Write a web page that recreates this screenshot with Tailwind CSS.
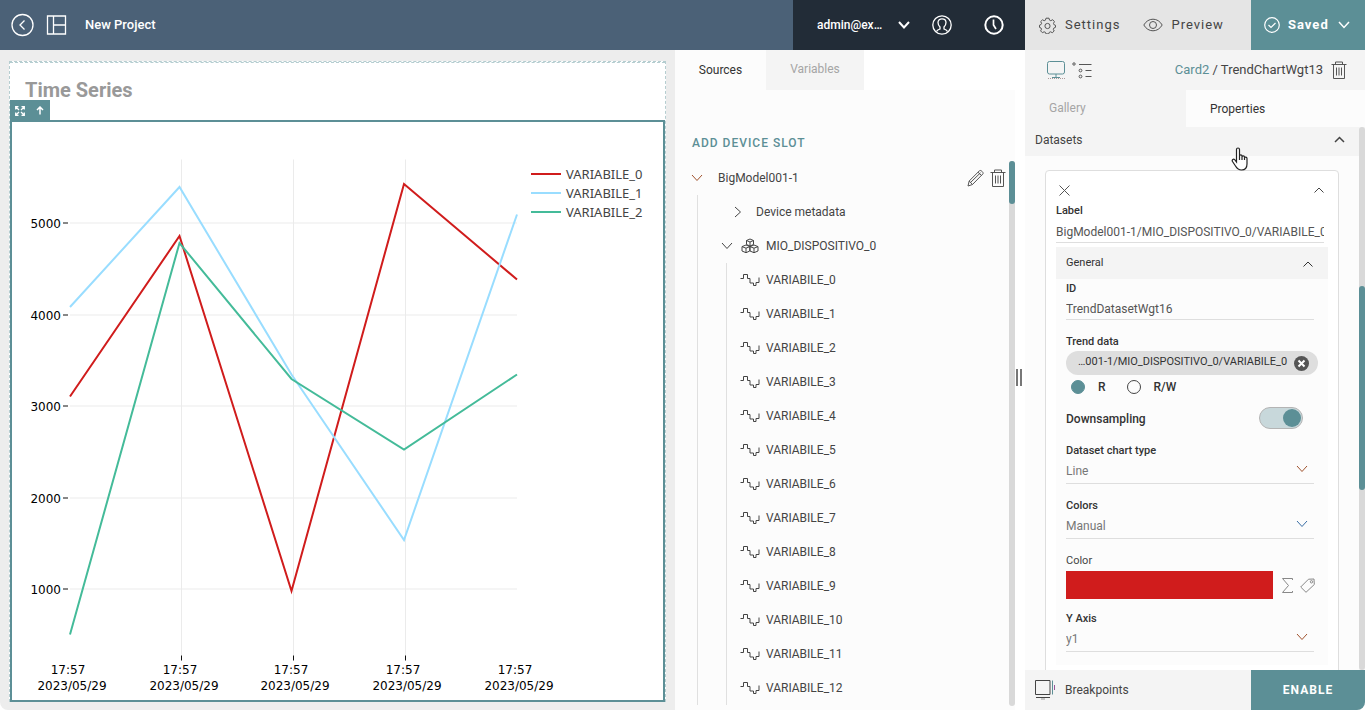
<!DOCTYPE html>
<html lang="en">
<head>
<meta charset="utf-8">
<meta name="viewport" content="width=device-width, initial-scale=1">
<title>New Project</title>
<script src="https://cdn.jsdelivr.net/npm/@tailwindcss/browser@4"></script>
</head>
<body class="bg-white font-['Roboto',sans-serif] text-xs text-[#444]">
<svg class="hidden" xmlns="http://www.w3.org/2000/svg">
  <symbol id="wave" viewBox="0 0 20 14"><path d="M.5 5.500H3.500V1.500h4V5.500H10v4.500h3.500V12.500H16V9.500h3V4.500" fill="none" stroke="#444" /></symbol>
  <symbol id="down" viewBox="0 0 12 8"><path d="M1 1l5 5.500 5-5.500" fill="none" stroke="currentColor"/></symbol>
  <symbol id="up" viewBox="0 0 12 8"><path d="M1.500 6.500L6 2l4.500 4.500" fill="none" stroke="currentColor"/></symbol>
  <symbol id="trash" viewBox="0 0 16 18"><g fill="none" stroke="#555"><path d="M.5 3.500h15M4.500 3.500v-2.500h7v2.500M2.500 3.500v14h11v-14M5.500 6.500v8M8 6.500v8M10.500 6.500v8"/></g></symbol>
</svg>
<div class="flex h-screen flex-col overflow-hidden rounded-b-lg">

  <header class="flex h-[50px] shrink-0 text-white">
    <div class="flex min-w-0 flex-1 items-center bg-[#4b6177] pl-[11px]">
      <button aria-label="Back" class="mr-3"><svg width="23" height="24" viewBox="0 0 23 24" fill="none" stroke="#fff" stroke-width="1.300"><circle cx="11.500" cy="12" r="10.500"/><path d="M13.500 7.500L9 12l4.500 4.500"/></svg></button>
      <button aria-label="Layout" class="mr-[18px]"><svg width="21" height="20" viewBox="0 0 21 20" fill="none" stroke="#fff" stroke-width="1.300"><path d="M1.500 1h18v18h-18zM7.500 1v18M7.500 10h12"/></svg></button>
      <h1 class="text-[13px] font-medium">New Project</h1>
    </div>
    <div class="flex w-[232px] items-center bg-[#222c37] pl-6">
      <button class="flex w-[93px] items-center justify-between text-xs font-medium"><span>admin@ex…</span><svg width="12" height="8"><use href="#down" stroke-width="2"/></svg></button>
      <button aria-label="Account" class="ml-[22px]"><svg width="20" height="20" viewBox="0 0 20 20" fill="none" stroke="#fff" stroke-width="1.300"><circle cx="10" cy="10" r="9.200"/><path d="M4.500 16.500c.5-1.500 2-2 3.500-2.500v-2C6.500 10.500 6 9 6 7.500 6 5 7.800 3.800 10 3.800S14 5 14 7.500c0 1.500-.5 3-2 4.500v2c1.500.5 3 1 3.500 2.500"/></svg></button>
      <button aria-label="History" class="ml-8"><svg width="20" height="20" viewBox="0 0 20 20" fill="none" stroke="#fff"><circle cx="10" cy="10" r="8.700" stroke-width="2"/><path d="M9.500 4.500v5.500l2.500 4" stroke-width="1.700"/></svg></button>
    </div>
    <div class="flex w-[340px] bg-[#e5e5e5] text-[13px] tracking-[1px] text-[#444]">
      <button class="flex items-center pl-[14px]"><svg class="mr-[9px]" width="17" height="17" viewBox="0 0 17 17" fill="none" stroke="#555" stroke-linejoin="round"><path d="M7 1.200h3l.5 1.900 1.300.6 1.900-1 1.700 1.900-.9 1.800.4 1.200 1.600.7v2l-1.700.8-.5 1.200.9 1.700-1.900 1.700-1.700-.9-1.300.5-.6 1.600H7l-.6-1.600-1.300-.5-1.700.9-1.800-1.800.9-1.700-.5-1.200-1.500-.6v-2.200l1.500-.6.6-1.300-.9-1.700 1.800-1.800 1.700.9 1.200-.5z"/><circle cx="8.500" cy="9" r="2.600"/></svg>Settings</button>
      <button class="flex items-center pl-[23px]"><svg class="mr-2" width="20" height="14" viewBox="0 0 20 14" fill="none" stroke="#555"><path d="M.8 7C3 3.200 6.300 1.200 10 1.200S17 3.200 19.200 7C17 10.800 13.700 12.800 10 12.800S3 10.800.8 7z"/><circle cx="10" cy="7" r="3.500"/></svg>Preview</button>
      <button class="ml-auto flex w-[114px] items-center bg-[#5c8f96] pl-[13px] font-bold text-white"><svg class="mr-2" width="16" height="16" viewBox="0 0 16 16" fill="none" stroke="#fff" stroke-width="1.200"><circle cx="8" cy="8" r="7.300"/><path d="M4.500 8l2.500 2.500L11.500 6"/></svg>Saved<svg class="ml-[9px]" width="12" height="8" viewBox="0 0 12 8" fill="none" stroke="#fff" stroke-width="1.500"><path d="M1 1l5 5.500 5-5.500"/></svg></button>
    </div>
  </header>

  <div class="flex min-h-0 flex-1">
    <main class="min-w-0 flex-1 bg-[#ededed] px-[9px] pt-[11px] pb-2">
      <section class="flex h-full flex-col border border-b-0 border-dashed border-[#b5cdd0] bg-white">
        <h2 class="h-[58px] shrink-0 border-t border-dashed border-[#b5cdd0] pt-[13px] pl-[15px] text-xl font-bold leading-7 text-[#999]">Time Series</h2>
        <div class="relative min-h-0 flex-1 border-2 border-[#5c8f96]">
          <div class="absolute -top-[22px] -left-0.5 flex h-[21px] w-10 items-center bg-[#5c8f96]">
            <button aria-label="Expand" class="w-5"><svg class="mx-auto" width="10" height="10" viewBox="0 0 10 10" fill="none" stroke="#fff" stroke-width="1.300"><path d="M.7 3.500V.7h2.800M6.500.7h2.800v2.800M9.300 6.500v2.800H6.500M3.500 9.300H.7V6.500M1 1l3 3M9 1L6 4M9 9L6 6M1 9l3-3"/></svg></button>
            <button aria-label="Move up" class="w-5"><svg class="mx-auto" width="8" height="9" viewBox="0 0 8 9" fill="none" stroke="#fff" stroke-width="1.500"><path d="M4 8.500V1.200M1 4l3-3 3 3"/></svg></button>
          </div>
          <!-- Trend chart: grid, series, tick labels, legend -->
          <svg class="h-full w-full" viewBox="12 123 651 577" role="img" aria-label="Time series chart">
            <g stroke="#ebebeb" fill="none">
              <path d="M70 223.500H517M70 315.500H517M70 406.500H517M70 498.500H517M70 589.500H517M181.500 160V656M293.500 160V656M405.500 160V656"/>
            </g>
            <path stroke="#111" fill="none" d="M63 223.500h5M63 315.500h5M63 406.500h5M63 498.500h5M63 589.500h5M181.500 656v5M293.500 656v5M405.500 656v5"/>
            <g fill="none" stroke-width="2">
              <path stroke="#d01c1c" d="M70 397L179.500 236.500 291.500 591.500 404 184.500 517 280"/>
              <path stroke="#99ddff" d="M70 307.500L179.500 187.500 291.500 375 404 540.500 517 215"/>
              <path stroke="#44bb99" d="M70 635L179.500 243.500 291.500 379.500 404 450 517 375"/>
              <path stroke="#d01c1c" d="M531 174.500h30"/><path stroke="#99ddff" d="M531 193.500h30"/><path stroke="#44bb99" d="M531 212.500h30"/>
            </g>
            <g font-family="'Noto Sans',sans-serif" font-size="13" fill="#444"><text x="566" y="179">VARIABILE_0</text><text x="566" y="198">VARIABILE_1</text><text x="566" y="217">VARIABILE_2</text></g>
            <g font-family="'DejaVu Sans',sans-serif" font-size="12" fill="#000">
              <g text-anchor="end"><text x="61" y="228">5000</text><text x="61" y="320">4000</text><text x="61" y="411">3000</text><text x="61" y="503">2000</text><text x="61" y="594">1000</text></g>
              <g text-anchor="middle"><text x="68" y="674">17:57</text><text x="180" y="674">17:57</text><text x="291" y="674">17:57</text><text x="403" y="674">17:57</text><text x="515" y="674">17:57</text>
              <text x="72" y="690">2023/05/29</text><text x="184" y="690">2023/05/29</text><text x="295" y="690">2023/05/29</text><text x="407" y="690">2023/05/29</text><text x="519" y="690">2023/05/29</text></g>
            </g>
          </svg>
        </div>
      </section>
    </main>

    <aside class="flex w-[350px] flex-col">
      <nav class="flex h-10 shrink-0 bg-white">
        <button class="w-[91px] bg-[#fcfcfc] text-[#333]">Sources</button>
        <button class="w-[98px] bg-[#f4f4f4] pb-0.5 text-[#a5a5a5]">Variables</button>
      </nav>
      <div class="flex min-h-0 flex-1">
        <div class="flex min-w-0 flex-1 flex-col bg-[#fcfcfc] pb-1">
          <div class="h-[71px] shrink-0 pt-[45px] pl-[17px]"><button class="font-medium tracking-[1px] text-[#5c8f96]">ADD DEVICE SLOT</button></div>
          <div class="flex min-h-0 flex-1">
            <div class="min-w-0 flex-1 overflow-hidden pl-4">
              <div class="flex h-[34px] items-center">
                <button class="flex items-center"><svg class="mr-[15px] text-[#a0522d]" width="12" height="8"><use href="#down"/></svg>BigModel001-1</button>
                <button aria-label="Edit" class="ml-auto"><svg width="18" height="18" viewBox="0 0 18 18" fill="none" stroke="#555"><path d="M1 17l1.200-5L12.500 1.700c1.200-1.200 4.500 2 3.400 3.200L5.500 15.500zM2.200 12l3.300 3.500M11 3.200L14.500 6.500M3.500 13.500L13.500 3.800"/></svg></button>
                <button aria-label="Delete" class="mr-[3px] ml-[5px]"><svg width="16" height="18"><use href="#trash"/></svg></button>
              </div>
              <ul class="ml-[6px] border-l border-[#e0e0e0] pl-[23px]">
                <li class="flex h-[34px] items-center pl-[13px]"><svg class="mr-[14px]" width="8" height="12" viewBox="0 0 8 12" fill="none" stroke="#444"><path d="M1 1l5.500 5L1 11"/></svg>Device metadata</li>
                <li>
                  <div class="flex h-[34px] items-center"><svg class="mr-2" width="12" height="8"><use href="#down"/></svg><svg class="mr-[7px]" width="18" height="16" viewBox="0 0 18 16" fill="none" stroke="#444"><path d="M9 1l3.500 1.500v4L9 8 5.500 6.500v-4zM5.500 2.500L9 4l3.500-1.500M9 4v4M5 7l3.800 1.600v4.400L5 14.700 1 13V8.600zM1 8.600l4 1.600 3.800-1.600M5 10.200v4.500M13 7l4 1.600V13l-4 1.700L9 13V8.600zM9 8.600l4 1.600 4-1.600M13 10.200v4.500"/></svg>MIO_DISPOSITIVO_0</div>
                  <ul class="ml-[5px] border-l border-[#e0e0e0] pl-[13px]">
                    <li class="flex h-[34px] items-center gap-[6px]"><svg width="20" height="14"><use href="#wave"/></svg>VARIABILE_0</li>
                    <li class="flex h-[34px] items-center gap-[6px]"><svg width="20" height="14"><use href="#wave"/></svg>VARIABILE_1</li>
                    <li class="flex h-[34px] items-center gap-[6px]"><svg width="20" height="14"><use href="#wave"/></svg>VARIABILE_2</li>
                    <li class="flex h-[34px] items-center gap-[6px]"><svg width="20" height="14"><use href="#wave"/></svg>VARIABILE_3</li>
                    <li class="flex h-[34px] items-center gap-[6px]"><svg width="20" height="14"><use href="#wave"/></svg>VARIABILE_4</li>
                    <li class="flex h-[34px] items-center gap-[6px]"><svg width="20" height="14"><use href="#wave"/></svg>VARIABILE_5</li>
                    <li class="flex h-[34px] items-center gap-[6px]"><svg width="20" height="14"><use href="#wave"/></svg>VARIABILE_6</li>
                    <li class="flex h-[34px] items-center gap-[6px]"><svg width="20" height="14"><use href="#wave"/></svg>VARIABILE_7</li>
                    <li class="flex h-[34px] items-center gap-[6px]"><svg width="20" height="14"><use href="#wave"/></svg>VARIABILE_8</li>
                    <li class="flex h-[34px] items-center gap-[6px]"><svg width="20" height="14"><use href="#wave"/></svg>VARIABILE_9</li>
                    <li class="flex h-[34px] items-center gap-[6px]"><svg width="20" height="14"><use href="#wave"/></svg>VARIABILE_10</li>
                    <li class="flex h-[34px] items-center gap-[6px]"><svg width="20" height="14"><use href="#wave"/></svg>VARIABILE_11</li>
                    <li class="flex h-[34px] items-center gap-[6px]"><svg width="20" height="14"><use href="#wave"/></svg>VARIABILE_12</li>
                  </ul>
                </li>
              </ul>
            </div>
            <div class="w-[6px] rounded-full bg-[#d9d9d9]"><div class="h-[43px] rounded-full bg-[#5c8f96]"></div></div>
          </div>
        </div>
        <div class="flex w-[10px] items-center justify-center bg-white pr-0.5 pb-[45px]"><div class="h-[17px] w-[6px] border-x-2 border-[#777]"></div></div>
      </div>
    </aside>

    <aside class="relative flex w-[340px] flex-col bg-[#f4f4f4]">
      <div class="flex h-10 shrink-0 items-center pr-[18px] pl-[22px]">
        <button aria-label="Desktop view" class="mr-[7px]"><svg width="18" height="18" viewBox="0 0 18 18" fill="none" stroke="#5c8f96"><rect x=".5" y=".5" width="17" height="12.500" rx="2"/><path d="M9 13v4M5 16.500h8"/><path d="M1 17.500h17" stroke-dasharray="1 1" stroke="#a99"/></svg></button>
        <button aria-label="Tree view"><svg width="20" height="17" viewBox="0 0 20 17" fill="none" stroke="#555"><circle cx="2" cy="2" r="1.200"/><path d="M7 2.500h12.500M13.500 8.500h6M13.500 14.500h6"/><circle cx="8.500" cy="8.500" r="1.400"/><circle cx="8.500" cy="14.500" r="1.400"/></svg></button>
        <div class="ml-auto text-[13px]"><a href="#card2" class="text-[#5c8f96]">Card2</a> / TrendChartWgt13</div>
        <button aria-label="Delete widget" class="ml-2"><svg width="16" height="18"><use href="#trash"/></svg></button>
      </div>
      <nav class="flex h-[37px] shrink-0">
        <button class="w-[161px] pb-0.5 pl-6 text-left text-[#a5a5a5]">Gallery</button>
        <button class="flex-1 bg-[#fcfcfc] pl-6 text-left text-[#333]">Properties</button>
      </nav>
      <div class="flex min-h-0 flex-1">
        <div class="min-w-0 flex-1 overflow-hidden bg-[#fcfcfc]">
          <button class="flex h-[29px] w-full items-center justify-between bg-[#f4f4f4] pr-[14px] pb-[3px] pl-[10px]"><span>Datasets</span><svg width="11" height="8" viewBox="0 0 11 8" fill="none" stroke="#444" stroke-width="1.500"><path d="M1 6l4.500-4.500L10 6"/></svg></button>
          <div class="mx-5 mt-[14px] rounded-t border border-[#dedede] bg-white px-[10px] pt-[9px]">
            <div class="flex h-5 items-center justify-between px-[3px]"><button aria-label="Remove"><svg width="11" height="11" viewBox="0 0 11 11" stroke="#555"><path d="M.5.5l10 10M10.500.5l-10 10"/></svg></button><button aria-label="Collapse"><svg width="12" height="8"><use href="#up"/></svg></button></div>
            <label for="lbl" class="block h-[21px] pt-px text-[11px] leading-5 font-medium text-[#333]">Label</label>
            <input id="lbl" class="block h-[22px] w-[268px] border-b border-[#dedede] text-[#555]" value="BigModel001-1/MIO_DISPOSITIVO_0/VARIABILE_0">
            <button class="mt-1 flex h-8 w-full items-center justify-between bg-[#f4f4f4] pt-px pr-[14px] pl-[10px] text-[11px] text-[#333]"><span>General</span><svg width="12" height="8"><use href="#up"/></svg></button>
            <div class="flex flex-col bg-[#fcfcfc] pr-[14px] pb-[13px] pl-[10px]">
              <label for="wid" class="h-5 text-[11px] leading-5 font-medium text-[#333]">ID</label>
              <input id="wid" class="h-[21px] w-full border-b border-[#dedede] text-[#555]" value="TrendDatasetWgt16">
              <div class="mt-3 h-[19px] text-[11px] leading-[19px] font-medium text-[#333]">Trend data</div>
              <div class="flex h-6 w-[252px] items-center rounded-full bg-[#dedede] pl-3 text-[11px] text-[#333]"><span class="flex-1 pb-[2px] whitespace-nowrap">…001-1/MIO_DISPOSITIVO_0/VARIABILE_0</span><button aria-label="Clear" class="mr-2"><svg width="17" height="17" viewBox="0 0 17 17"><circle cx="8.500" cy="8.500" r="7.500" fill="#555"/><path d="M5.500 5.500l6 6M11.500 5.500l-6 6" stroke="#fff" stroke-width="2"/></svg></button></div>
              <div class="flex h-6 items-center pl-[5px] font-medium text-[#333]">
                <input id="r" name="mode" type="radio" checked class="size-[14px] appearance-none rounded-full border border-[#444] checked:border-[#5c8f96] checked:bg-[#5c8f96]"><label for="r" class="ml-[13px]">R</label>
                <input id="rw" name="mode" type="radio" class="ml-[21px] size-[14px] appearance-none rounded-full border border-[#444] checked:border-[#5c8f96] checked:bg-[#5c8f96]"><label for="rw" class="ml-[13px]">R/W</label>
              </div>
              <div class="mt-2 flex h-[22px] items-center justify-between pr-[11px]">
                <label for="ds" class="pt-px font-medium text-[#333]">Downsampling</label>
                <input id="ds" type="checkbox" checked class="h-[22px] w-11 appearance-none rounded-full border border-[#b4b4b4] bg-[#c8d8db] p-px before:block before:size-[18px] before:rounded-full before:bg-[#5c8f96] checked:before:ml-auto">
              </div>
              <label for="type" class="mt-3 h-[18px] text-[11px] leading-5 font-medium text-[#333]">Dataset chart type</label>
              <div class="flex h-[25px] items-center border-b border-[#dedede]"><select id="type" class="-mr-[18px] h-full flex-1 appearance-none text-[#777]"><option>Line</option></select><svg class="pointer-events-none mr-[6px] mb-1 text-[#a0522d]" width="12" height="8"><use href="#down"/></svg></div>
              <label for="colors" class="mt-3 h-[18px] text-[11px] leading-5 font-medium text-[#333]">Colors</label>
              <div class="flex h-[25px] items-center border-b border-[#dedede]"><select id="colors" class="-mr-[18px] h-full flex-1 appearance-none text-[#777]"><option>Manual</option></select><svg class="pointer-events-none mr-[6px] mb-1 text-[#3a6ea5]" width="12" height="8"><use href="#down"/></svg></div>
              <div class="mt-3 h-5 text-[11px] leading-5">Color</div>
              <div class="flex h-7 items-center gap-[9px]"><button aria-label="Pick color" class="h-full w-[207px] shrink-0 bg-[#d01c1c]"></button>
                <button aria-label="Expression" class="shrink-0"><svg width="11" height="15" viewBox="0 0 11 15" fill="none" stroke="#888"><path d="M10.500 2V.5H.5l6 7-6 7h10V13"/></svg></button>
                <button aria-label="Tag" class="-ml-0.5 shrink-0"><svg width="15" height="15" viewBox="0 0 15 15" fill="none" stroke="#888"><path d="M.7 9L8.500 1.200 14 1l.3 5.500L6 14.300z"/><circle cx="11.500" cy="3.800" r="1.200"/></svg></button>
              </div>
              <label for="axis" class="mt-[10px] h-[18px] text-[11px] leading-5 font-medium text-[#333]">Y Axis</label>
              <div class="flex h-[25px] items-center border-b border-[#dedede]"><select id="axis" class="-mr-[18px] h-full flex-1 appearance-none text-[#777]"><option>y1</option></select><svg class="pointer-events-none mr-[6px] mb-1 text-[#a0522d]" width="12" height="8"><use href="#down"/></svg></div>
            </div>
            <div class="h-10"></div>
          </div>
        </div>
        <div class="w-[6px] rounded-full bg-[#d9d9d9] pt-[159px]"><div class="h-[204px] rounded-full bg-[#5c8f96]"></div></div>
      </div>
      <footer class="flex h-10 shrink-0">
        <button class="flex flex-1 items-center pl-[10px]"><svg class="mr-[10px]" width="20" height="20" viewBox="0 0 20 20" fill="none" stroke="#444"><path d="M.5.500h14.500v14H.500z"/><path d="M17.500.5v14" stroke="#5c8f96"/><path d="M19.500 5v5" stroke="#959"/><path d="M1 17.500h14"/><path d="M6 19h4" stroke="#999"/></svg>Breakpoints</button>
        <button class="w-[114px] bg-[#5c8f96] font-bold tracking-[1px] text-white">ENABLE</button>
      </footer>
      <!-- Hand pointer over the properties panel -->
      <svg class="pointer-events-none absolute top-[97px] left-[206px]" width="18" height="24" viewBox="0 0 18 24" fill="#fff" stroke="#222" stroke-width="1.200"><path d="M5.500 15V2.500c0-2 3-2 3 0V9c0-1.500 2.500-1.500 2.500 0v1c0-1.500 2.500-1.500 2.500 0v1c0-1.300 2.500-1.300 2.500.5v5.500c0 4-2 6-5.500 6-3 0-4.500-1.500-6-4l-3-4.500c-1-1.800 1-3 2.200-1.800z"/><path d="M8.500 9v4M11 10v3M13.500 11v2" fill="none"/></svg>
    </aside>
  </div>
</div>
</body>
</html>
